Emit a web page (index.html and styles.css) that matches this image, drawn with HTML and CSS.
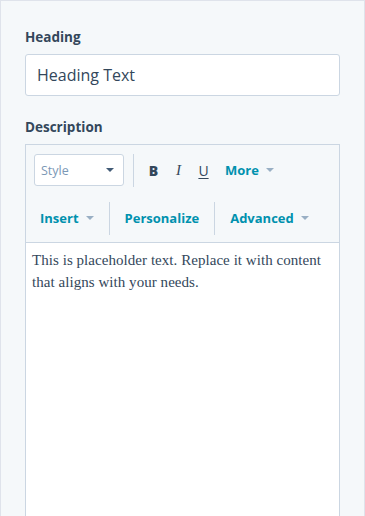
FILE: index.html
```html
<!DOCTYPE html>
<html lang="en">
<head>
  <meta charset="UTF-8" />
  <meta name="viewport" content="width=device-width, initial-scale=1.0"/>
  <title>Module Editor</title>
  <link rel="stylesheet" href="styles.css">
</head>
<body>
  <div class="panel">
    <div class="field">
      <label class="field-label" for="heading">Heading</label>
      <input type="text" id="heading" class="text-input" value="Heading Text" />
    </div>

    <div class="field">
      <div class="field-label">Description</div>
      <div class="editor">
        <div class="toolbar">
          <div class="toolbar-row">
            <div class="style-select">
              <span>Style</span>
              <span class="caret dark"></span>
            </div>
            <div class="divider"></div>
            <button class="fmt bold">B</button>
            <button class="fmt italic">I</button>
            <button class="fmt underline">U</button>
            <button class="link-btn more">More <span class="caret"></span></button>
          </div>
          <div class="toolbar-row second">
            <button class="link-btn">Insert <span class="caret"></span></button>
            <div class="divider"></div>
            <button class="link-btn">Personalize</button>
            <div class="divider"></div>
            <button class="link-btn">Advanced <span class="caret"></span></button>
          </div>
        </div>
        <div class="editor-body">
          <p>This is placeholder text. Replace it with content that aligns with your needs.</p>
        </div>
      </div>
    </div>
  </div>
</body>
</html>
```

FILE: styles.css
```css
body {
  margin: 0;
  font-family: "Open Sans", "Liberation Sans", sans-serif;
  color: #33475b;
  background: #f5f8fa;
}
.panel {
  background: #f5f8fa;
  border-top: 1px solid #dfe3eb;
  border-left: 1px solid #dfe3eb;
  border-right: 1px solid #dfe3eb;
  height: 516px;
  padding: 26px 24px 0 24px;
  overflow: hidden;
  box-sizing: border-box;
}
.field {
  margin-bottom: 21px;
}
.field-label {
  display: block;
  font-size: 13.5px;
  font-weight: bold;
  line-height: 20px;
  margin-bottom: 7px;
}
.text-input {
  box-sizing: border-box;
  width: 100%;
  height: 42px;
  padding: 0 11px;
  border: 1px solid #cbd6e2;
  border-radius: 3px;
  background: #fff;
  color: #33475b;
  font-family: inherit;
  font-size: 16px;
}
.editor {
  border: 1px solid #cbd6e2;
  background: #fff;
  height: 400px;
}
.toolbar {
  background: #f5f8fa;
  border-bottom: 1px solid #cbd6e2;
  padding: 8px 0 7px 8px;
}
.toolbar-row {
  display: flex;
  align-items: center;
  height: 34px;
}
.toolbar-row.second {
  margin-top: 14px;
}
.style-select {
  box-sizing: border-box;
  width: 90px;
  height: 32px;
  display: flex;
  align-items: center;
  justify-content: space-between;
  padding: 0 9px 0 6px;
  border: 1px solid #cbd6e2;
  border-radius: 3px;
  background: #fff;
  color: #7c98b6;
  font-size: 12.5px;
}
.divider {
  width: 1px;
  height: 33px;
  background: #cbd6e2;
  margin: 0 9px;
}
button {
  background: none;
  border: none;
  padding: 0;
  font-family: inherit;
  cursor: pointer;
}
.fmt {
  color: #33475b;
  font-size: 14px;
  width: 25px;
  text-align: center;
}
.bold { font-weight: 800; margin-left: -2px; }
.italic { font-style: italic; font-family: "Liberation Serif", serif; font-size: 15px; }
.underline { text-decoration: underline; text-underline-offset: 2px; }
.link-btn {
  color: #0091ae;
  font-size: 13px;
  font-weight: bold;
  padding: 0 6px;
  display: flex;
  align-items: center;
}
.link-btn.more {
  margin-left: 3px;
}
.caret {
  display: inline-block;
  width: 0;
  height: 0;
  margin-left: 7px;
  border-left: 4px solid transparent;
  border-right: 4px solid transparent;
  border-top: 4px solid #99afc4;
}
.caret.dark {
  border-top-color: #425b76;
}
.editor-body {
  padding: 6px 6px;
}
.editor-body p {
  margin: 0;
  font-family: "Liberation Serif", serif;
  font-size: 15px;
  letter-spacing: 0.05px;
  line-height: 22px;
  color: #33475b;
}
```
